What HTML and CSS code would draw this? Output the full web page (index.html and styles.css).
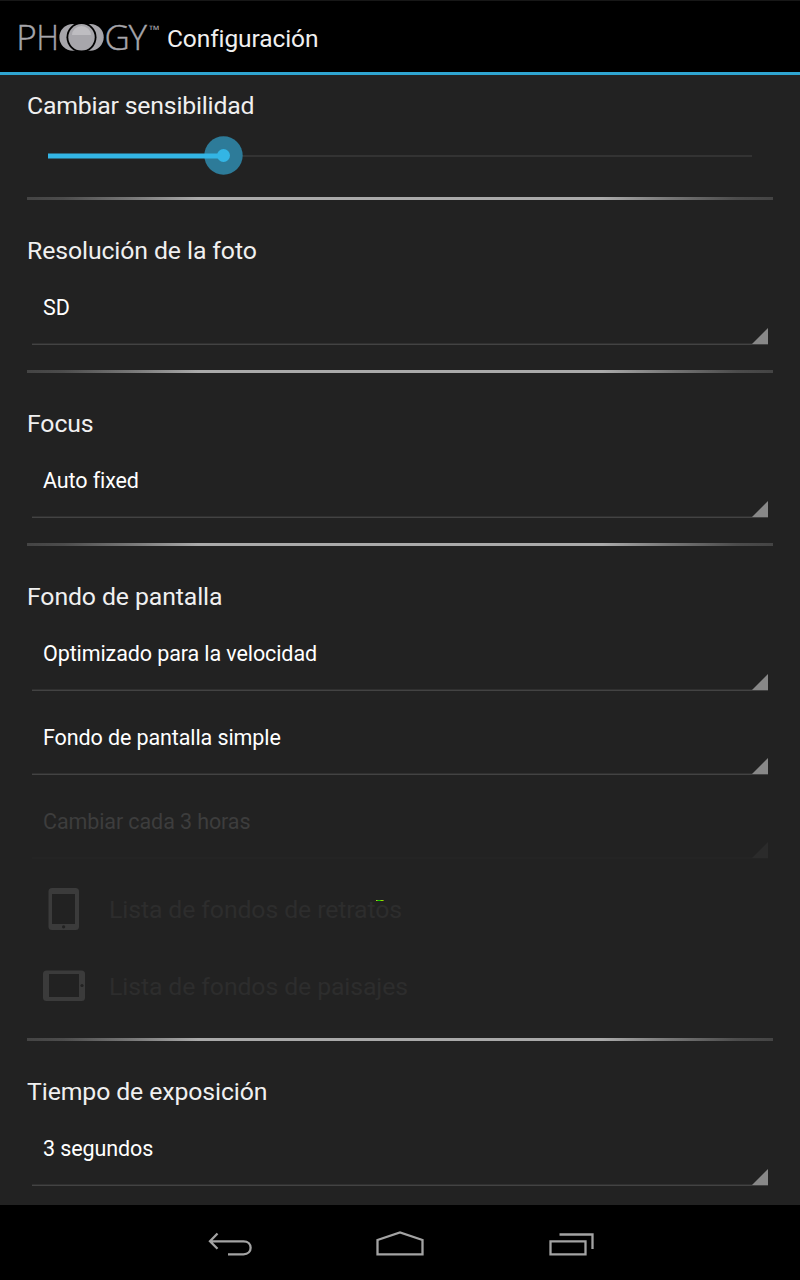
FILE: index.html
```html
<!DOCTYPE html>
<html lang="es">
<head>
<meta charset="utf-8">
<title>Configuración</title>
<link rel="stylesheet" href="styles.css">
</head>
<body>
<header class="bar">
  <svg class="logo" width="152" height="56" viewBox="11 9 152 56">
    <g class="logo-text">
      <text x="16.200" y="50">P</text>
      <text x="36.600" y="50" textLength="22.300" lengthAdjust="spacingAndGlyphs">H</text>
      <text x="104.500" y="50">G</text>
      <text x="128.500" y="50">Y</text>
      <text class="tm" x="149" y="34" textLength="11" lengthAdjust="spacingAndGlyphs">™</text>
    </g>
    <circle cx="72.800" cy="37.300" r="13.400" fill="#a7a6ab"/>
    <circle cx="90.300" cy="37.300" r="13.400" fill="#a7a6ab"/>
    <circle cx="81.500" cy="37.300" r="15" fill="#000"/>
    <circle cx="81.500" cy="37.300" r="13.200" fill="#a7a6ab"/>
    <path d="M72 35a9.500 9 0 0 1 19 0z" fill="#bebdc1"/>
  </svg>
  <h1 class="bar-title">Configuración</h1>
</header>
<main class="content">
  <section class="group first">
    <h2 class="title tight">Cambiar sensibilidad</h2>
    <svg class="slider" width="746" height="40" viewBox="27 136 746 40">
      <path d="M48 156H752" stroke="#333" stroke-width="2"/>
      <circle cx="223.500" cy="155.500" r="19.200" fill="#2d7b99"/>
      <path d="M48 156H223" stroke="#33b5e5" stroke-width="5"/>
      <circle cx="223.500" cy="155.500" r="6.500" fill="#33b5e5"/>
    </svg>
  </section>
  <section class="group">
    <h2 class="title">Resolución de la foto</h2>
    <div class="spinner">SD</div>
  </section>
  <section class="group">
    <h2 class="title">Focus</h2>
    <div class="spinner">Auto fixed</div>
  </section>
  <section class="group tall">
    <h2 class="title">Fondo de pantalla</h2>
    <div class="spinner">Optimizado para la velocidad</div>
    <div class="spinner">Fondo de pantalla simple</div>
    <div class="spinner disabled">Cambiar cada 3 horas</div>
    <div class="item">
      <svg class="device" width="42" height="44" viewBox="0 0 42 44"><rect x="5.500" y="1" width="30.500" height="42" rx="3.500" fill="#3b3b3b"/><rect x="9" y="7" width="23" height="30" fill="#222"/><circle cx="20.600" cy="39.800" r="1.600" fill="#222"/></svg>
      <span>Lista de fondos de retratos</span>
      <i class="mark"></i>
    </div>
    <div class="item">
      <svg class="device" width="42" height="44" viewBox="0 0 42 44"><rect x="0" y="6.500" width="42" height="30.500" rx="3.500" fill="#3b3b3b"/><rect x="6" y="10" width="30" height="23" fill="#222"/><circle cx="39" cy="21.500" r="1.600" fill="#222"/></svg>
      <span>Lista de fondos de paisajes</span>
    </div>
  </section>
  <section class="group last">
    <h2 class="title">Tiempo de exposición</h2>
    <div class="spinner">3 segundos</div>
  </section>
</main>
<nav class="nav">
  <svg width="400" height="40" viewBox="200 1224 400 40" fill="none" stroke="#a3a3a3" stroke-width="2.300">
    <path d="M217.500 1233.500L210 1241.200L217.500 1248.800M210 1241.300H243.500C253 1241.300 253 1254.300 243.500 1254.300H228"/>
    <path d="M377.500 1254.300V1240L400 1232.500L422.500 1240V1254.300Z"/>
    <path d="M550.500 1241.300H585.500V1254.300H550.500ZM559.500 1234.500H592.500V1249"/>
  </svg>
</nav>
</body>
</html>
```
FILE: styles.css
```css
* { box-sizing: border-box; }
body {
  margin: 0;
  width: 800px;
  height: 1280px;
  display: flex;
  flex-direction: column;
  overflow: hidden;
  background: #222;
  color: #f0f0f0;
  font-family: Roboto, sans-serif;
}
.bar {
  height: 75px;
  padding: 1px 0 0 11px;
  display: flex;
  align-items: center;
  background: #000;
  border-top: 1px solid #171717;
  border-bottom: 3px solid #2fa5d1;
}
.logo { display: block; }
.logo-text { fill: #a7a6ab; stroke: #a7a6ab; stroke-width: .4px; font: 300 35px "Open Sans", sans-serif; }
.logo-text .tm { font-size: 12px; font-weight: 400; stroke: none; }
.bar-title { margin: 0 0 0 4px; padding-top: 3px; font-size: 24.500px; font-weight: 400; line-height: 36px; letter-spacing: -.1px; }
.content { height: 1130px; padding: 0 27px; overflow: hidden; }
.group { height: 173px; padding-top: 33px; border: 0 solid; border-width: 0 0 3px; border-image: linear-gradient(90deg, #444 0, #4c4c4c 5%, #777 14%, #aaa 23%, #aaa 77%, #777 86%, #4c4c4c 95%, #444 100%) 1; border-image-width: 0 0 3px; }
.first { height: 125px; padding-top: 13px; }
.tall { height: 495px; }
.last { border: 0; }
.title { margin: 0; height: 36px; line-height: 36px; font-size: 24.800px; font-weight: 400; letter-spacing: -.1px; white-space: nowrap; }
.tight { letter-spacing: -.2px; }
.slider { display: block; margin-top: 12px; }
.spinner {
  height: 84px;
  margin: 0 5px;
  padding: 23px 11px 0;
  position: relative;
  font-size: 21.500px;
  letter-spacing: -.1px;
  line-height: 32px;
  color: #fff;
}
.spinner::before { content: ""; position: absolute; left: 0; right: 0; top: 74px; height: 2px; background: linear-gradient(#303030 50%, #434343 50%); }
.spinner::after { content: ""; position: absolute; right: 0; top: 59px; width: 16px; height: 16px; background: #888; clip-path: polygon(100% 0, 100% 100%, 0 100%); }
.disabled { color: #3d3d3d; }
.disabled::before { background: #242424; }
.disabled::after { background: #2b2b2b; }
.item { height: 77px; padding: 7px 0 0 16px; display: flex; align-items: center; gap: 24px; position: relative; font-size: 24.800px; letter-spacing: -.1px; color: #2d2d2d; }
.device { display: block; }
.mark { position: absolute; left: 349px; top: 33px; width: 8px; height: 1px; background: linear-gradient(90deg, #b9c51c 0 12%, #0c0 25% 50%, #8ee000 62% 85%, #574a10); }
.nav { height: 75px; padding-top: 19px; display: flex; justify-content: center; align-items: flex-start; background: #000; }
```
